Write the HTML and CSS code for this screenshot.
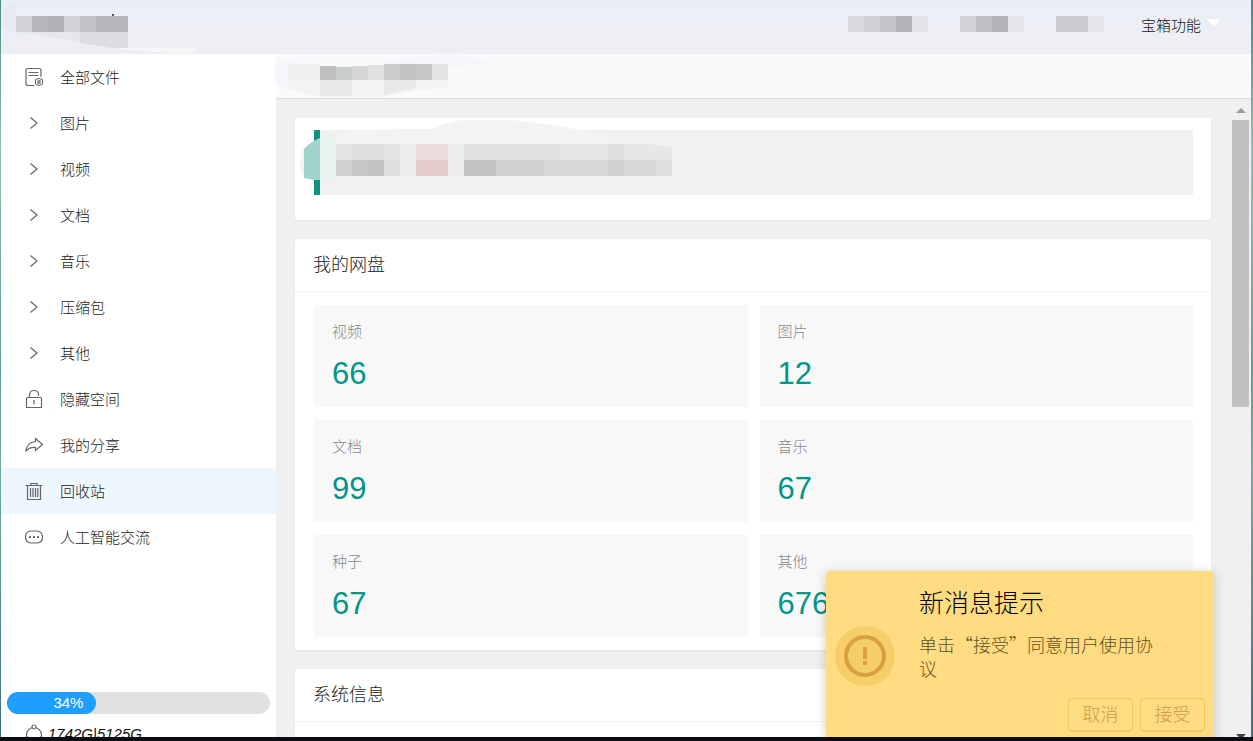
FILE: index.html
```html
<!DOCTYPE html>
<html lang="zh-CN">
<head>
<meta charset="utf-8">
<title>我的网盘</title>
<link rel="stylesheet" href="styles.css">
</head>
<body>
<div class="app">
  <header class="topbar">
    <svg class="brand" width="200" height="54" viewBox="0 0 200 54" aria-hidden="true">
      <path fill="#e6eaf2" d="M16 2Q2 6 1 18Q2 30 14 33L80 36V16H16z"/>
      <path fill="#e6e6eb" d="M30 32H80V42L30 34z"/>
      <path fill="#f6f6f8" d="M112 48H198L194 53Q150 53 112 48z"/>
      <g shape-rendering="crispEdges">
        <path fill="#d2d3d7" d="M16 16h16v16H16zM64 16h16v16H64z"/>
        <path fill="#b6b7bb" d="M32 16h16v16H32z"/>
        <path fill="#b0b1b5" d="M48 16h16v16H48z"/>
        <path fill="#c2c3c7" d="M80 16h16v16H80z"/>
        <path fill="#b6b7bb" d="M96 16h32v16H96z"/>
      </g>
      <path fill="#dcdce1" d="M80 32h48v16h-16L80 43z"/>
      <path fill="#55565a" d="M112 14h2v2h-2z"/>
    </svg>
    <nav class="topnav">
      <svg width="80" height="16" viewBox="0 0 80 16" shape-rendering="crispEdges" aria-hidden="true"><path fill="#dadbdf" d="M0 0h16v16H0z"/><path fill="#d0d1d5" d="M16 0h16v16H16z"/><path fill="#c4c5c9" d="M32 0h16v16H32z"/><path fill="#b4b5b9" d="M48 0h16v16H48z"/><path fill="#e2e3e8" d="M64 0h16v16H64z"/></svg>
      <svg width="64" height="16" viewBox="0 0 64 16" shape-rendering="crispEdges" aria-hidden="true"><path fill="#d2d3d7" d="M0 0h16v16H0z"/><path fill="#c0c1c5" d="M16 0h16v16H16z"/><path fill="#b4b5b9" d="M32 0h16v16H32z"/><path fill="#e4e5ea" d="M48 0h16v16H48z"/></svg>
      <svg width="48" height="16" viewBox="0 0 48 16" shape-rendering="crispEdges" aria-hidden="true"><path fill="#cacbcf" d="M0 0h32v16H0z"/><path fill="#e5e6eb" d="M32 0h16v16H32z"/></svg>
      <button class="menu-btn" type="button">宝箱功能
        <svg width="14" height="7" viewBox="0 0 14 7" aria-hidden="true"><path fill="#fff" d="M0 0h14L7 7z"/></svg>
      </button>
    </nav>
  </header>
  <div class="body">
    <aside class="sidebar">
      <nav class="side-nav">
        <a class="item" href="#"><svg class="icon" viewBox="0 0 20 20"><path d="M10.500 18.500H4Q2 18.500 2 16.500V3.500Q2 1.500 4 1.500H15Q17 1.500 17 3.500V10M4.500 5.500H14.500M4.500 8.500H14.500"/><path stroke-width="1" d="M11.500 12.500L15 11.500L18.500 12.500V17L15 18.500L11.500 17zM13 14H17M15 13V17M13 16H17"/></svg>全部文件</a>
        <a class="item" href="#"><svg class="icon" viewBox="0 0 20 20"><path d="M6.500 4.500L13 10L6.500 15.500"/></svg>图片</a>
        <a class="item" href="#"><svg class="icon" viewBox="0 0 20 20"><path d="M6.500 4.500L13 10L6.500 15.500"/></svg>视频</a>
        <a class="item" href="#"><svg class="icon" viewBox="0 0 20 20"><path d="M6.500 4.500L13 10L6.500 15.500"/></svg>文档</a>
        <a class="item" href="#"><svg class="icon" viewBox="0 0 20 20"><path d="M6.500 4.500L13 10L6.500 15.500"/></svg>音乐</a>
        <a class="item" href="#"><svg class="icon" viewBox="0 0 20 20"><path d="M6.500 4.500L13 10L6.500 15.500"/></svg>压缩包</a>
        <a class="item" href="#"><svg class="icon" viewBox="0 0 20 20"><path d="M6.500 4.500L13 10L6.500 15.500"/></svg>其他</a>
        <a class="item" href="#"><svg class="icon" viewBox="0 0 20 20"><path d="M3.500 8.500H16.500Q17.500 8.500 17.500 9.500V18.500H2.500V9.500Q2.500 8.500 3.500 8.500zM5.500 8.500V5.500Q6 1.500 10 1.500Q14 1.500 14.500 5V7M10 11V15.500"/></svg>隐藏空间</a>
        <a class="item" href="#"><svg class="icon" viewBox="0 0 20 20"><path d="M11.500 3.500L18.500 9.500L11.500 15.500V12.500Q5 12 1.500 16.500Q3 7.500 11.500 6.500z"/></svg>我的分享</a>
        <a class="item current" href="#" aria-current="page"><svg class="icon" viewBox="0 0 20 20"><path d="M1.500 4.500H18.500M7 4V2.500H13V4M3.500 5V18.500H16.500V5M6.500 7V16M9 7V16M11.500 7V16M13.800 7V16"/></svg>回收站</a>
        <a class="item" href="#"><svg class="icon" viewBox="0 0 20 20"><path d="M7 4H13Q18.500 4.500 18.500 10Q18.500 15.500 13 16H7Q1.500 15.500 1.500 10Q1.500 4.500 7 4z"/><path class="solid" d="M5 9.200h2v1.800H5zM9 9.200h2v1.800H9zM13 9.200h2v1.800h-2z"/></svg>人工智能交流</a>
      </nav>
      <div class="storage">
        <div class="progress"><div class="progress-fill" style="width:34%">34%</div></div>
        <div class="quota"><svg class="icon" viewBox="0 0 20 20"><circle cx="10" cy="11" r="7.500"/><circle cx="10" cy="3" r="2" fill="#fff"/><circle cx="3" cy="15" r="2" fill="#fff"/><circle cx="17" cy="15" r="2" fill="#fff"/></svg><em>1742G|5125G</em></div>
      </div>
    </aside>
    <main class="main">
      <div class="crumbs">
        <svg width="216" height="44" viewBox="0 0 216 44" aria-hidden="true">
          <path fill="#f3f4f8" d="M0 14Q4 3 16 6Q50 18 90 12L140 3Q200-4 212 10L174 12V26Q130 34 110 42L60 43Q12 40 0 26z" opacity=".7"/>
          <path fill="#eeefee" d="M14 10h32v16H14z"/>
          <path fill="#f2f4f4" d="M14 26h160v8Q130 36 110 43H60Q30 42 14 35z"/>
          <path fill="#e7eae9" d="M46 26h32v16H46zM110 26h32v8L110 41z"/>
          <g shape-rendering="crispEdges"><path fill="#c0c0be" d="M46 12h16v14H46z"/><path fill="#c9cccd" d="M62 13h16v13H62z"/><path fill="#d5d7d6" d="M78 12h16v14H78z"/><path fill="#dfe1e3" d="M94 11h16v15H94z"/><path fill="#cbcecd" d="M110 10h16v16h-16z"/><path fill="#c1c3c2" d="M126 10h16v16h-16z"/><path fill="#c6c8c7" d="M142 10h16v16h-16z"/><path fill="#e1e4e3" d="M158 10h16v16h-16z"/></g>
        </svg>
      </div>
      <div class="scroller">
        <div class="content">
          <section class="card notice-card">
            <blockquote class="notice">
              <svg class="notice-art" width="420" height="78" viewBox="0 0 420 78" aria-hidden="true">
                <path fill="#f3f3f3" d="M20 18Q40 8 130 9Q160-4 200-1Q240 2 290 12L372 28V58H4Q-4 42 4 28z"/>
                <path fill="#a1d2cc" d="M4 29Q10 22 20 18V60H14L4 58z"/>
                <path fill="#eaf2f0" d="M20 18L36 12V59H20z"/>
                <g shape-rendering="crispEdges">
                  <path fill="#e3e3e3" d="M36 24h16v16H36zM84 24h16v16H84z"/><path fill="#dedede" d="M52 24h32v16H52zM84 40h16v16H84z"/><path fill="#ececec" d="M100 24h64v32h-64z"/><path fill="#d0d0d0" d="M36 40h16v16H36z"/><path fill="#c8c8c8" d="M52 40h16v16H52z"/><path fill="#c3c3c3" d="M68 40h16v16H68z"/>
                  <path fill="#ecdede" d="M116 24h32v16h-32z"/><path fill="#e4cdcc" d="M116 40h32v16h-32z"/>
                  <path fill="#e1e1e1" d="M164 24h96v16h-96z"/><path fill="#e6e6e6" d="M260 24h48v16h-48z"/><path fill="#dfdfdf" d="M308 24h16v16h-16z"/>
                  <path fill="#c2c2c2" d="M164 40h32v16h-32z"/><path fill="#d1d1d1" d="M196 40h48v16h-48zM308 40h16v16h-16z"/><path fill="#d7d7d7" d="M244 40h64v16h-64zM324 40h32v16h-32z"/><path fill="#dfdfdf" d="M356 40h16v16h-16z"/>
                </g>
                <path fill="#e7e7e7" d="M324 24H350L372 28V40H324z"/>
              </svg>
            </blockquote>
          </section>
          <section class="card">
            <h2 class="card-title">我的网盘</h2>
            <div class="tiles">
              <a class="tile" href="#"><h3>视频</h3><p>66</p></a>
              <a class="tile" href="#"><h3>图片</h3><p>12</p></a>
              <a class="tile" href="#"><h3>文档</h3><p>99</p></a>
              <a class="tile" href="#"><h3>音乐</h3><p>67</p></a>
              <a class="tile" href="#"><h3>种子</h3><p>67</p></a>
              <a class="tile" href="#"><h3>其他</h3><p>676</p></a>
            </div>
          </section>
          <section class="card system">
            <h2 class="card-title">系统信息</h2>
          </section>
        </div>
        <div class="scrollbar" aria-hidden="true">
          <span class="arrow"></span>
          <span class="thumb"></span>
          <span class="arrow down"></span>
        </div>
      </div>
    </main>
  </div>
  <div class="toast" role="alertdialog" aria-labelledby="toast-title" aria-describedby="toast-text">
    <svg class="toast-icon" width="60" height="60" viewBox="0 0 60 60" aria-hidden="true"><circle cx="30" cy="30" r="30" fill="#f5cd69"/><circle cx="30" cy="30" r="19" fill="none" stroke="#d9a03e" stroke-width="4"/><path fill="#d9a03e" d="M28 21h4v12h-4zM28 35h4v4h-4z"/></svg>
    <div class="toast-body">
      <h2 id="toast-title">新消息提示</h2>
      <p id="toast-text">单击“接受”同意用户使用协议</p>
      <div class="toast-actions"><button type="button">取消</button><button type="button">接受</button></div>
    </div>
  </div>
</div>
</body>
</html>
```

FILE: styles.css
```css
* { box-sizing: border-box; }
body {
  margin: 0;
  background: linear-gradient(#4d8689, #8cc2b6 20%, #5c9c9c 50%, #6fae9f 64%, #37707f);
  color: #222;
  font: 300 15px/20px "Liberation Sans", "Noto Sans CJK SC", sans-serif;
}
h2, h3, p, blockquote { margin: 0; font-weight: 300; }
a { color: inherit; text-decoration: none; }
svg { display: block; flex: none; }

.app {
  position: relative;
  display: flex;
  flex-direction: column;
  height: 100vh;
  overflow: hidden;
  padding: 0 2px 0 1px;
  border-bottom: 4px solid #0c0d10;
}
.topbar {
  flex: none;
  display: flex;
  justify-content: space-between;
  height: 54px;
  background: linear-gradient(#e9eef7, #eeeff5 60%, #edeef4);
}
.brand { margin-left: -1px; }
.topnav { display: flex; gap: 32px; padding: 16px 30px 0 0; }
.menu-btn {
  display: flex;
  align-items: flex-start;
  gap: 6px;
  align-self: flex-start;
  padding: 0;
  margin-left: 5px;
  border: 0;
  background: none;
  color: #111;
  font: inherit;
}
.menu-btn svg { margin-top: 3px; }

.body { flex: 1; display: flex; min-height: 0; }
.sidebar {
  flex: none;
  display: flex;
  flex-direction: column;
  justify-content: space-between;
  width: 275px;
  background: #fff;
}
.item {
  display: flex;
  align-items: center;
  gap: 16px;
  height: 46px;
  padding: 1px 0 0 23px;
}
.item .icon { margin-bottom: 2px; }
.item.current { background: #eff7fe; }
.icon {
  width: 20px;
  height: 20px;
  fill: none;
  stroke: #666;
  stroke-width: 1.2;
}
.icon .solid { fill: #555; stroke: none; }
.storage { height: 45px; padding: 0 6px; }
.progress { height: 22px; border-radius: 11px; background: #e1e1e1; }
.progress-fill {
  height: 22px;
  padding-right: 13px;
  border-radius: 11px;
  background: #1e9fff;
  color: #fff;
  line-height: 22px;
  text-align: right;
}
.quota {
  display: flex;
  gap: 4px;
  padding: 10px 0 0 17px;
  color: #111;
  font-size: 15px;
}

.main { flex: 1; display: flex; flex-direction: column; min-width: 0; background: #f0f0f0; }
.crumbs {
  flex: none;
  height: 45px;
  border-bottom: 1px solid #dcdddf;
  background: #f8fafc;
}
.crumbs svg { margin-left: -2px; }
.scroller { flex: 1; display: flex; min-height: 0; }
.content { flex: 1; min-width: 0; padding: 19px 21px 0 19px; overflow: hidden; }
.card {
  margin-bottom: 19px;
  border-radius: 2px;
  background: #fff;
  box-shadow: 0 1px 2px rgba(0, 0, 0, .06);
}
.notice-card { padding: 12px 18px 25px 19px; }
.notice {
  position: relative;
  height: 65px;
  border-left: 6px solid #10917f;
  background: #f1f1f1;
}
.notice-art { position: absolute; left: -20px; top: -10px; }
.card-title {
  padding: 13px 18px;
  border-bottom: 1px solid #f4f4f4;
  font-size: 18px;
  line-height: 26px;
}
.tiles {
  display: grid;
  grid-template-columns: 1fr 1fr;
  gap: 13px 12px;
  padding: 13px 18px 13px 19px;
}
.tile { padding: 17px 18px 15px; background: #f8f8f8; color: #888; }
.tile h3 { font-size: 15px; line-height: 20px; }
.tile p { padding-top: 14px; color: #009688; font-size: 31px; line-height: 36px; }
.system { min-height: 120px; }

.scrollbar {
  flex: none;
  display: flex;
  flex-direction: column;
  align-items: center;
  width: 17px;
  margin-right: 2px;
}
.arrow {
  margin: 9px 0 7px;
  border: 5px solid transparent;
  border-top: 0;
  border-bottom-color: #9b9b9b;
}
.thumb { width: 17px; height: 45%; background: #c1c1c1; }
.arrow.down {
  margin: auto 0 -2px;
  border-top: 5px solid #444;
  border-bottom: 0;
}

.toast {
  position: absolute;
  right: 39px;
  bottom: 0;
  display: flex;
  gap: 24px;
  width: 388px;
  padding: 15px 9px 6px;
  border-radius: 4px 4px 0 0;
  background: #ffdc82;
  box-shadow: 0 2px 12px rgba(0, 0, 0, .2);
}
.toast-icon { margin-top: 40px; }
.toast-body { flex: 1; }
.toast h2 { color: #000; font-size: 25px; line-height: 34px; }
.toast p {
  max-width: 236px;
  padding-top: 12px;
  color: #65511f;
  font-family: "Noto Sans CJK SC", sans-serif;
  font-size: 18px;
  line-height: 24px;
}
.toast-actions { display: flex; justify-content: flex-end; gap: 7px; padding-top: 18px; }
.toast button {
  width: 65px;
  height: 33px;
  padding: 0;
  border: 1px solid #f2c663;
  border-radius: 4px;
  background: none;
  box-shadow: 0 1px 1px rgba(190, 140, 40, .2);
  color: #cf9a42;
  font: inherit;
  font-size: 18px;
}
```
